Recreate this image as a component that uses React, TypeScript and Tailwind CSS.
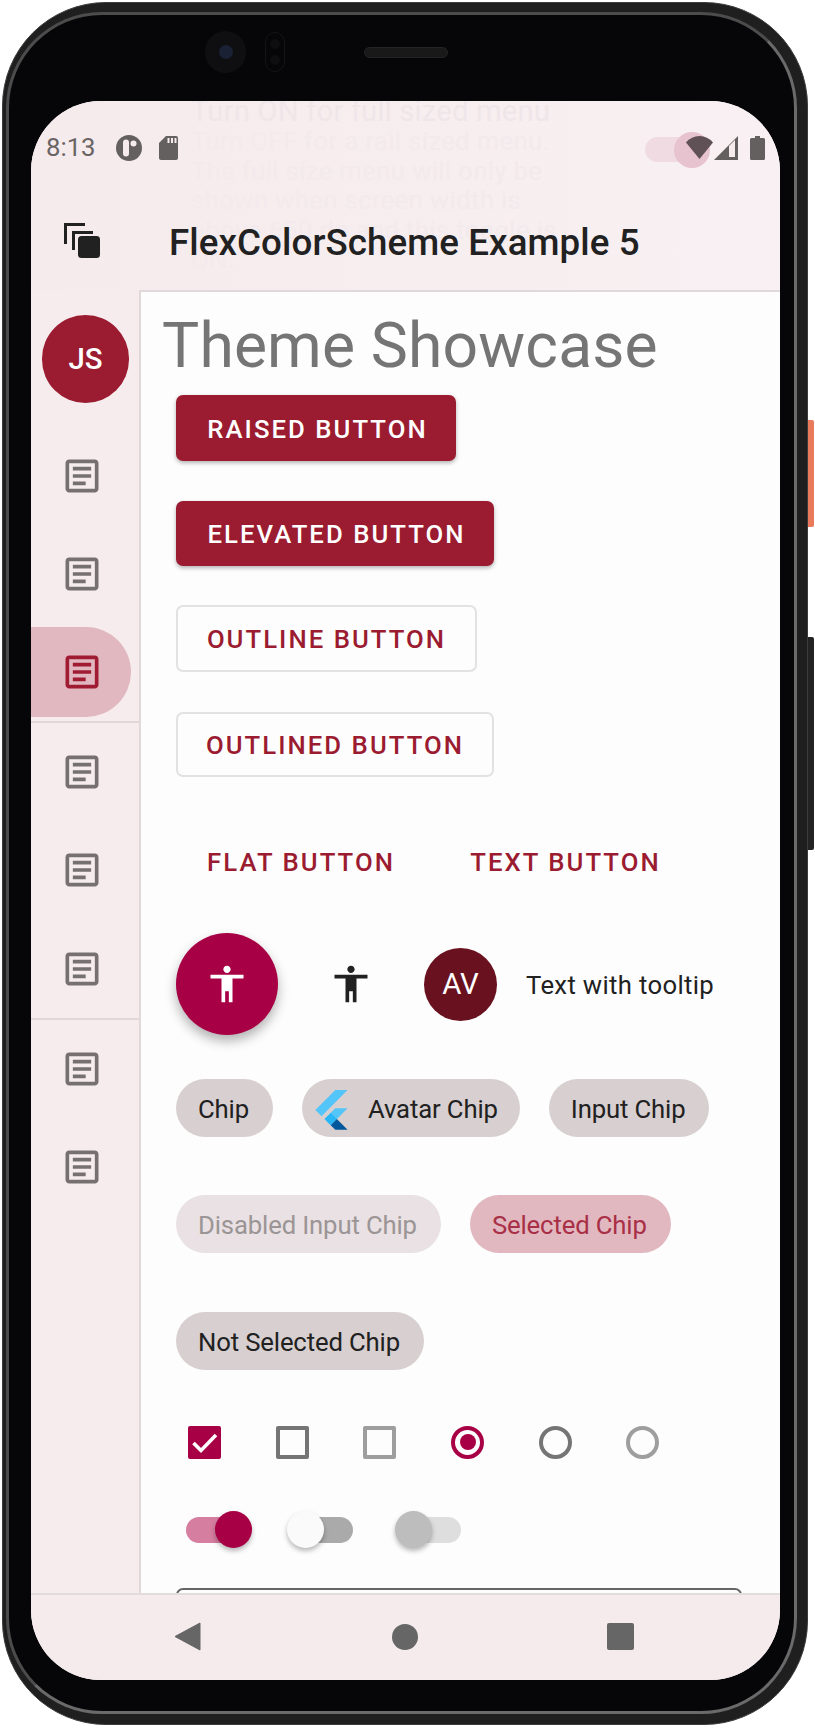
import React from "react";

const ROBOTO = "font-['Roboto',sans-serif]";

function ArticleIcon({ className }: { className: string }) {
  return (
    <svg viewBox="0 0 24 24" className={className} fill="currentColor">
      <path d="M19 5v14H5V5h14m0-2H5c-1.1 0-2 .9-2 2v14c0 1.1.9 2 2 2h14c1.1 0 2-.9 2-2V5c0-1.1-.9-2-2-2z" />
      <path d="M14 17H7v-2h7v2zm3-4H7v-2h10v2zm0-4H7V7h10v2z" />
    </svg>
  );
}

function AccessIcon({ className }: { className: string }) {
  return (
    <svg viewBox="0 0 24 24" className={className} fill="currentColor">
      <path d="M12 2c1.1 0 2 .9 2 2s-.9 2-2 2-2-.9-2-2 .9-2 2-2zm9 7h-6v13h-2v-6h-2v6H9V9H3V7h18v2z" />
    </svg>
  );
}

function FlutterLogo() {
  return (
    <svg viewBox="9 10 148 182" className="h-[40px] w-[33px] shrink-0">
      <path fill="#54C5F8" d="M37.7 128.9 9.8 101 100.4 10.4h55.7z" />
      <path fill="#54C5F8" d="M156.1 93.6h-55.7l-48.9 48.9 27.9 27.9z" />
      <path fill="#29B6F6" d="M51.5 142.5 79.4 114.6l27.9 27.9-27.9 27.9z" />
      <path fill="#01579B" d="M100.4 191.4h55.7l-48.8-48.9-27.9 27.9z" />
    </svg>
  );
}

function RailItem({ selected }: { selected?: boolean }) {
  return (
    <div className="flex h-[98px] items-center">
      <div className={`flex h-[90px] w-[100px] items-center rounded-r-[45px] pl-[29px] ${selected ? "bg-[#e1b8c0] text-[#a01c32]" : "text-[#767071]"}`}>
        <ArticleIcon className="h-[44px] w-[44px]" />
      </div>
    </div>
  );
}

function BtnText({ children, className = "pl-[3px] pt-[2px]" }: { children: string; className?: string }) {
  return <span className={`text-[25.7px] font-medium tracking-[2.05px] whitespace-nowrap ${className}`}>{children}</span>;
}

function Chip({ children, className = "bg-[#d7cfd0] text-[#212121]" }: { children: React.ReactNode; className?: string }) {
  return (
    <div className={`flex h-[58px] items-center rounded-full pl-[22px] pr-[24px] pt-[3px] text-[25.7px] tracking-[-0.14px] whitespace-nowrap ${className}`}>
      {children}
    </div>
  );
}

function Cell({ children }: { children: React.ReactNode }) {
  return <div className="flex h-[88px] w-[87.6px] items-center justify-center">{children}</div>;
}

function Toggle({ on, track, thumb }: { on?: boolean; track: string; thumb: string }) {
  return (
    <div className="relative h-[37px] w-[66px]">
      <div className={`absolute top-[5.5px] h-[26px] w-[62px] rounded-full ${on ? "left-0" : "right-0"} ${track}`} />
      <div className={`absolute top-0 h-[37px] w-[37px] rounded-full shadow-[0_3px_5px_rgba(0,0,0,0.28)] ${on ? "right-0" : "left-0"} ${thumb}`} />
    </div>
  );
}

export default function App() {
  return (
    <div className={`relative h-[1729px] w-[815px] overflow-hidden bg-white pl-[2px] pt-[2px] ${ROBOTO}`}>
      {/* side buttons */}
      <div className="absolute left-[808px] top-[420px] h-[107px] w-[6px] rounded-r-[2px] bg-[#ea7a5c]" />
      <div className="absolute left-[808px] top-[637px] h-[213px] w-[6px] rounded-r-[2px] bg-[#232323]" />

      <div className="h-[1723px] w-[806px] rounded-[104px] border border-[#3c3c3c] bg-[#1f1f1f] pb-[10px] pl-[3px] pr-[10px] pt-[9px]">
        <div className="flex h-full flex-col rounded-[96px] border-[3px] border-b-[#6a6a6a] border-l-[#4c4c4c] border-r-[#6a6a6a] border-t-[#4c4c4c] bg-[#060608] pb-[31px] pl-[22px] pr-[14px]">
          {/* camera + speaker */}
          <div className="flex h-[86px] shrink-0 items-center pb-[12px] pl-[174px]">
            <div className="flex h-[42px] w-[41px] items-center justify-center rounded-full bg-[#0f0f12]">
              <div className="h-[14px] w-[14px] rounded-full bg-[#1a2134]" />
            </div>
            <div className="ml-[19px] flex h-[40px] w-[20px] flex-col items-center justify-around rounded-full border border-[#141417] py-[3px]">
              <div className="h-[10px] w-[10px] rounded-full bg-[#0e0e10]" />
              <div className="h-[10px] w-[10px] rounded-full bg-[#0e0e10]" />
            </div>
            <div className="ml-[79px] h-[11px] w-[84px] rounded-full border border-[#242426] bg-[#19191a]" />
          </div>

          {/* screen */}
          <div className="relative flex h-[1579px] w-[749px] flex-col overflow-hidden rounded-[70px] bg-[#f6ecee]">
            {/* status bar + app bar */}
            <div className="relative h-[189px] shrink-0 bg-linear-to-r from-[#f5ebed] to-[#f8f0f2]">
              {/* text scrolled under the app bar */}
              <div className="absolute left-[160px] top-[-6px] w-[400px] text-[25.7px] leading-[29.5px] tracking-[0.35px] text-[#f2eaec]">
                <div className="text-[29.4px] leading-[32px] tracking-[0.1px] text-[#efe6e9]">Turn ON for full sized menu</div>
                <div>Turn OFF for a rail sized menu.</div>
                <div>The full size menu will only be</div>
                <div>shown when screen width is</div>
                <div>above 650 dp and this toggle is</div>
                <div>ON.</div>
              </div>
              {/* faded toggle */}
              <div className="absolute left-[614px] top-[36px] h-[25px] w-[58px] rounded-full bg-[#efdbe1]" />
              <div className="absolute left-[643px] top-[31px] h-[36px] w-[36px] rounded-full bg-[#e7c3cf]" />

              <div className="relative flex h-[90px] items-center pl-[15px] pr-[15px] pt-[3px]">
                <span className="text-[25.7px] leading-none text-[#6a6464]">8:13</span>
                <svg viewBox="0 0 26 26" className="ml-[20px] h-[26px] w-[26px]">
                  <circle cx="13" cy="13" r="13" fill="#646060" />
                  <rect x="7" y="4.5" width="6" height="17" rx="3" fill="#f6ecee" />
                  <circle cx="17.5" cy="8.5" r="3" fill="#f6ecee" />
                </svg>
                <svg viewBox="0 0 19 24" className="ml-[17px] h-[24px] w-[19px]">
                  <path d="M7 0h10a2 2 0 0 1 2 2v20a2 2 0 0 1-2 2H2a2 2 0 0 1-2-2V7z" fill="#646060" />
                  <path d="M8.5 2h2v5h-2zM12 2h2v5h-2zM15.5 2h2v5h-2z" fill="#f6ecee" />
                </svg>
                <div className="ml-auto flex items-center">
                  <svg viewBox="0 0 27 23" className="mr-[1px] h-[23px] w-[27px]">
                    <path d="M13.5 23 0 6.5Q5.5 0 13.5 0T27 6.5z" fill="#5f5156" />
                  </svg>
                  <svg viewBox="0 0 24 24" className="h-[24px] w-[24px]">
                    <path d="M0 24 24 0v24z" fill="#646060" />
                    <path d="M15 10 21 4v17h-6z" fill="#f6ecee" />
                  </svg>
                  <svg viewBox="0 0 15 24" className="ml-[12px] h-[24px] w-[15px]">
                    <path d="M5 0h5v2h3.5a1.5 1.5 0 0 1 1.5 1.5v19a1.5 1.5 0 0 1-1.5 1.5h-12A1.5 1.5 0 0 1 0 22.5v-19A1.5 1.5 0 0 1 1.5 2H5z" fill="#646060" />
                  </svg>
                </div>
              </div>
              <div className="relative flex h-[99px] items-start pl-[33px] pt-[31px]">
                <svg viewBox="0 0 36 36" className="h-[36px] w-[36px] shrink-0 text-[#212121]" fill="currentColor">
                  <path d="M0 22V1h21v3H3v18zM8 28V9h21v3H11v16z" />
                  <rect x="14" y="14" width="22" height="22" rx="3.5" />
                </svg>
                <div className="ml-[69px] pt-[1px] text-[36.7px] font-medium leading-[40px] tracking-[0.1px] whitespace-nowrap text-[#212121]">
                  FlexColorScheme Example 5
                </div>
              </div>
            </div>

            {/* middle */}
            <div className="flex min-h-0 flex-1">
              <div className="w-[108px] shrink-0">
                <div className="ml-[11px] mt-[25px] flex h-[88px] w-[87px] items-center justify-center rounded-full bg-[#9b1b30] text-[29.4px] font-medium text-white">
                  JS
                </div>
                <div className="mt-[24px]">
                  <RailItem />
                  <RailItem />
                  <RailItem selected />
                  <div className="h-[2px] bg-[#e0d7d9]" />
                  <RailItem />
                  <RailItem />
                  <div className="mt-[1px]"><RailItem /></div>
                  <div className="h-[2px] bg-[#e0d7d9]" />
                  <RailItem />
                  <RailItem />
                </div>
              </div>

              <div className="min-w-0 flex-1 overflow-hidden border-l-2 border-t-2 border-[#e0d8da] bg-[#fdfdfd] pl-[35px]">
                <div className="-ml-[14px] mt-[17px] h-[73px] text-[62.4px] font-normal leading-[73px] tracking-[0.15px] whitespace-nowrap text-[#757575]">
                  Theme Showcase
                </div>

                <div className="mt-[13px] flex h-[66px] w-[280px] items-center justify-center rounded-[7px] bg-[#9b1b30] text-white shadow-[0_2px_4px_rgba(0,0,0,0.3)]">
                  <BtnText>RAISED BUTTON</BtnText>
                </div>
                <div className="mt-[40px] flex h-[65px] w-[318px] items-center justify-center rounded-[7px] bg-[#9b1b30] text-white shadow-[0_2px_4px_rgba(0,0,0,0.3)]">
                  <BtnText>ELEVATED BUTTON</BtnText>
                </div>
                <div className="mt-[39px] flex h-[67px] w-[301px] items-center justify-center rounded-[7px] border-2 border-[#e2e2e2] text-[#9b1b30]">
                  <BtnText className="pt-[2px]">OUTLINE BUTTON</BtnText>
                </div>
                <div className="mt-[40px] flex h-[65px] w-[318px] items-center justify-center rounded-[7px] border-2 border-[#e2e2e2] text-[#9b1b30]">
                  <BtnText className="pt-[2px]">OUTLINED BUTTON</BtnText>
                </div>

                <div className="mt-[52px] flex h-[66px] items-center gap-[13px] text-[#9b1b30]">
                  <div className="flex h-full w-[250px] items-center justify-center"><BtnText className="">FLAT BUTTON</BtnText></div>
                  <div className="flex h-full w-[253px] items-center justify-center"><BtnText className="">TEXT BUTTON</BtnText></div>
                </div>

                <div className="mt-[38px] flex h-[102px] items-center">
                  <div className="flex h-[102px] w-[102px] items-center justify-center rounded-full bg-[#a80045] text-white shadow-[0_6px_12px_rgba(0,0,0,0.3)]">
                    <AccessIcon className="h-[44px] w-[44px]" />
                  </div>
                  <AccessIcon className="ml-[51px] h-[44px] w-[44px] text-[#212121]" />
                  <div className="ml-[51px] flex h-[73px] w-[73px] items-center justify-center rounded-full bg-[#69111f] text-[29.4px] text-white">
                    AV
                  </div>
                  <div className="ml-[29px] pt-[2px] text-[25.7px] tracking-[0.33px] whitespace-nowrap text-[#212121]">Text with tooltip</div>
                </div>

                <div className="mt-[44px] flex gap-[29px]">
                  <Chip>Chip</Chip>
                  <Chip className="bg-[#d7cfd0] !pl-[13px] !pr-[22px] text-[#212121]">
                    <FlutterLogo />
                    <span className="ml-[20px]">Avatar Chip</span>
                  </Chip>
                  <Chip>Input Chip</Chip>
                </div>
                <div className="mt-[58px] flex gap-[29px]">
                  <Chip className="bg-[#e9e1e3] text-[#9b9596]">Disabled Input Chip</Chip>
                  <Chip className="bg-[#e1b8c0] text-[#a92f46]">Selected Chip</Chip>
                </div>
                <div className="mt-[59px] flex">
                  <Chip>Not Selected Chip</Chip>
                </div>

                <div className="-ml-[15px] mt-[28px] flex">
                  <Cell>
                    <svg viewBox="0 0 33 33" className="h-[33px] w-[33px]">
                      <rect width="33" height="33" rx="2" fill="#a80045" />
                      <path d="M5.5 17l7.5 7.5L28 9" fill="none" stroke="#fff" strokeWidth="3.6" />
                    </svg>
                  </Cell>
                  <Cell><div className="h-[33px] w-[33px] rounded-[2px] border-[4px] border-[#757575]" /></Cell>
                  <Cell><div className="h-[33px] w-[33px] rounded-[2px] border-[4px] border-[#9e9e9e]" /></Cell>
                  <Cell>
                    <div className="flex h-[33px] w-[33px] items-center justify-center rounded-full border-[4px] border-[#a80045]">
                      <div className="h-[16px] w-[16px] rounded-full bg-[#a80045]" />
                    </div>
                  </Cell>
                  <Cell><div className="h-[33px] w-[33px] rounded-full border-[4px] border-[#757575]" /></Cell>
                  <Cell><div className="h-[33px] w-[33px] rounded-full border-[4px] border-[#9e9e9e]" /></Cell>
                </div>

                <div className="ml-[10px] mt-[25px] flex">
                  <Toggle on track="bg-[#d67ea0]" thumb="bg-[#a80045]" />
                  <div className="ml-[35px]"><Toggle track="bg-[#aaaaaa]" thumb="bg-[#fafafa]" /></div>
                  <div className="ml-[42px]"><Toggle track="bg-[#dedede]" thumb="bg-[#bdbdbd]" /></div>
                </div>

                <div className="mt-[40px] h-[40px] w-[566px] rounded-t-[7px] border-2 border-[#666666]" />
              </div>
            </div>

            {/* android nav bar */}
            <div className="flex h-[87px] shrink-0 items-center border-t-2 border-[#e2dcdd] bg-[#f5ebed] pb-[2px]">
              <svg viewBox="0 0 27 29" className="ml-[143px] h-[29px] w-[27px]">
                <path d="M26 1v27L1 14.5z" fill="#666666" stroke="#666666" strokeLinejoin="round" />
              </svg>
              <div className="ml-[191px] h-[26px] w-[26px] rounded-full bg-[#666666]" />
              <div className="ml-[189px] h-[27px] w-[27px] rounded-[2px] bg-[#666666]" />
            </div>
          </div>
        </div>
      </div>
    </div>
  );
}
